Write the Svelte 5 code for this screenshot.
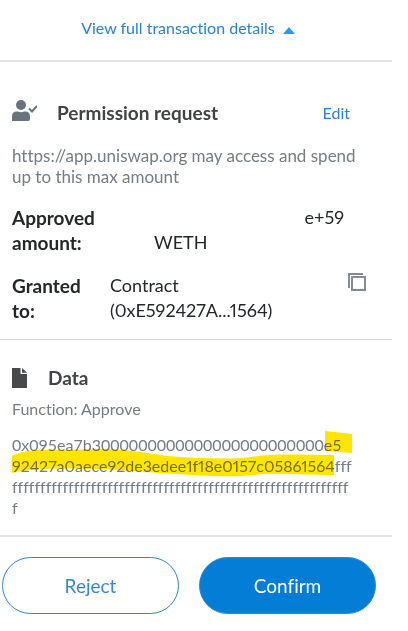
<script>
	let open = $state(true)
	const calldata = [
		'0x095ea7b3000000000000000000000000e5',
		'92427a0aece92de3edee1f18e0157c05861564fff',
		'f'.repeat(60),
		'f'
	]
	const toggle = () => {
		open = !open
	}
</script>

<main>
	<div class="toggle">
		<button class="link" aria-expanded={open} onclick={toggle}>
			View full transaction details
			<svg class="caret" class:closed={!open} width="12" height="7" viewBox="0 0 12 7"><path d="M6 0L12 7H0z" /></svg>
		</button>
	</div>

	{#if open}
		<section class="permission">
			<header>
				<svg class="user" width="25" height="21" viewBox="0 0 25 21">
					<circle cx="9" cy="5" r="5" />
					<path d="M0 21v-4.500q0-5 5-5h1q3 1.300 6 0h1q5 0 5 5V19q0 2-2 2z" />
					<path class="tick" d="M17 8.500l3 3 5-5.500" />
				</svg>
				<h2>Permission request</h2>
				<button class="link edit">Edit</button>
			</header>
			<p class="muted">https://app.uniswap.org may access and spend up to this max amount</p>
			<dl>
				<div class="row amount">
					<dt>Approved amount:</dt>
					<dd><span class="number">e+59</span><span>WETH</span></dd>
				</div>
				<div class="row">
					<dt>Granted to:</dt>
					<dd>Contract (0xE592427A...1564)</dd>
					<button class="copy" aria-label="Copy address">
						<svg width="18" height="18" viewBox="0 0 18 18">
							<path d="M15 1H1v14" />
							<rect x="4" y="4" width="13" height="13" />
						</svg>
					</button>
				</div>
			</dl>
		</section>

		<section class="data">
			<header>
				<svg class="file" width="15" height="20" viewBox="0 0 15 20">
					<path d="M0 0h8.500v6H15v14H0zM10 0l5 4.700h-5z" />
				</svg>
				<h2>Data</h2>
			</header>
			<p class="muted">Function: Approve</p>
			<div class="muted hex">
				<!-- marker stroke over the spender address -->
				<svg class="marker" width="342" height="50" viewBox="0 0 342 50">
					<path d="M313 0l27 3v19l-27-2z" />
					<path d="M0 25C10 20 22 18 45 19L90 18c25 0 45 4 65 7 30 2 60 4 85 1 22-4 48-2 82-2v20c-27 0-45-2-72-1-30 4-60 2-85 0-35-2-60-5-90-5-25-1-45 0-60 1Q9 40 0 42z" />
				</svg>
				{#each calldata as line}
					<span class="line">{line}</span>
				{/each}
			</div>
		</section>
	{/if}

	<footer>
		<button class="reject">Reject</button>
		<button class="confirm">Confirm</button>
	</footer>
</main>

<style>
	:global(body) {
		margin: 0;
		background: #fff;
	}

	main {
		margin-right: 16px;
		font-family: Lato, "Liberation Sans", sans-serif;
		font-size: 18px;
		line-height: 25px;
		font-variant-ligatures: none;
		font-variant-numeric: proportional-nums;
		color: #24272a;
	}

	button {
		font: inherit;
		padding: 0;
		border: 0;
		background: none;
		cursor: pointer;
	}

	h2, p, dl, dt, dd {
		margin: 0;
	}

	.toggle {
		height: 62px;
		display: flex;
		align-items: center;
		justify-content: center;
		padding: 0 16px 5px 0;
		box-sizing: border-box;
		border-bottom: 2px solid #e4e4e4;
	}

	.link {
		color: #2a82d8;
		font-size: 16px;
	}

	.caret {
		margin-left: 4px;
		fill: #3098ec;
	}

	.caret.closed {
		transform: rotate(180deg);
	}

	section {
		padding: 0 42px 0 12px;
	}

	header {
		display: flex;
		align-items: center;
	}

	h2 {
		font-size: 19px;
		line-height: 25px;
		color: #414346;
	}

	.permission {
		padding-top: 38px;
		padding-bottom: 16px;
		border-bottom: 1px solid #d6d9dc;
	}

	.permission h2 {
		margin-left: 20px;
	}

	.user {
		fill: #6a737d;
		align-self: flex-start;
	}

	.tick {
		fill: none;
		stroke: #6a737d;
		stroke-width: 2;
	}

	.edit {
		margin-left: auto;
	}

	.muted {
		font-size: 16px;
		line-height: 21px;
		color: #757c84;
	}

	.permission .muted {
		margin-top: 20px;
		margin-right: -10px;
		font-size: 17px;
	}

	.row {
		display: flex;
		margin-top: 18px;
	}

	dt {
		width: 84px;
		margin-right: 14px;
		flex: none;
		font-size: 19px;
		font-weight: bold;
	}

	dd {
		width: 170px;
	}

	.amount dd {
		flex: 1;
		display: flex;
		flex-direction: column;
		padding-left: 44px;
	}

	.number {
		align-self: flex-end;
		margin-right: 6px;
	}

	.copy {
		height: 18px;
		margin-left: auto;
		margin-right: -16px;
		line-height: 0;
	}

	.copy svg {
		fill: #fff;
		stroke: #858b94;
		stroke-width: 2;
	}

	.data {
		padding-top: 25px;
		padding-bottom: 17px;
		border-bottom: 2px solid #e4e4e4;
	}

	.data h2 {
		margin-left: 21px;
	}

	.file {
		fill: #48494b;
	}

	.data p {
		margin-top: 8px;
	}

	.hex {
		position: relative;
		margin-top: 15px;
	}

	.marker {
		position: absolute;
		top: -3px;
		left: 0;
		fill: #ffe500;
		mix-blend-mode: multiply;
	}

	.line {
		display: block;
		white-space: nowrap;
	}

	/* the zero padding runs too wide with proportional figures */
	.line:first-of-type {
		font-variant-numeric: tabular-nums;
	}

	footer {
		display: flex;
		gap: 20px;
		padding: 20px 16px 16px 2px;
	}

	footer button {
		flex: 1;
		height: 57px;
		border: 1px solid #2b88d9;
		border-radius: 29px;
		font-size: 19px;
	}

	.reject {
		color: #3a86d4;
	}

	.confirm {
		background: #037dd6;
		color: #fff;
	}
</style>
